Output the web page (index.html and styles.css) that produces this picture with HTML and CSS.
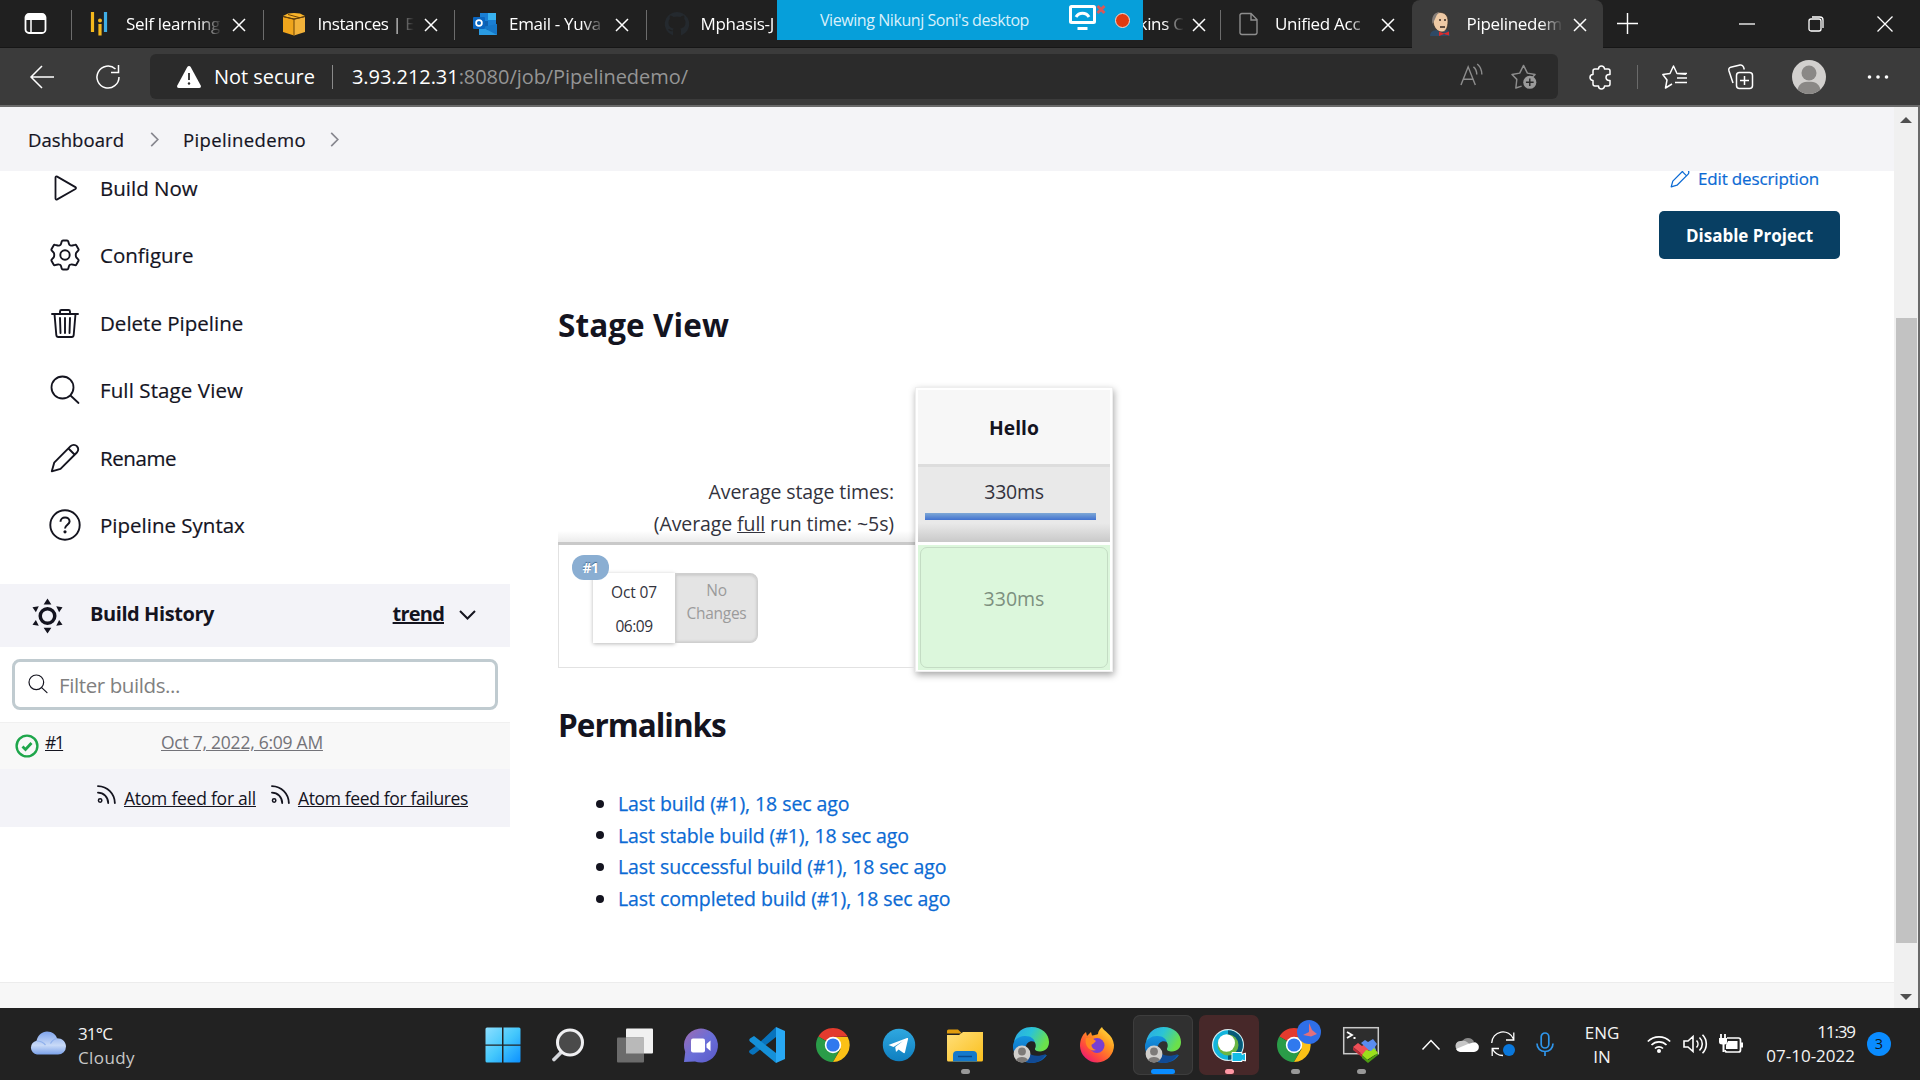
FILE: index.html
```html
<!DOCTYPE html>
<html lang="en">
<head>
<meta charset="utf-8">
<title>Pipelinedemo [Jenkins]</title>
<link rel="stylesheet" href="styles.css">
</head>
<body>
<svg class="defs" aria-hidden="true">
  <defs>
    <linearGradient id="g-edge1" x1="0" y1="0" x2="1" y2="0.4"><stop offset="0" stop-color="#2aa6e8"/><stop offset="0.5" stop-color="#2bc4d6"/><stop offset="1" stop-color="#6be04a"/></linearGradient>
    <linearGradient id="g-edge2" x1="0" y1="0" x2="0" y2="1"><stop offset="0" stop-color="#1595e0"/><stop offset="1" stop-color="#0b5cb4"/></linearGradient>
    <linearGradient id="g-win" gradientUnits="userSpaceOnUse" x1="0" y1="0" x2="36" y2="36"><stop offset="0" stop-color="#8fe0ff"/><stop offset="0.5" stop-color="#45c8fc"/><stop offset="1" stop-color="#0a8fff"/></linearGradient>
    <linearGradient id="g-cloud" x1="0" y1="0" x2="0" y2="1"><stop offset="0" stop-color="#7fa4ec"/><stop offset="0.6" stop-color="#c9daf7"/><stop offset="1" stop-color="#7ba2ea"/></linearGradient>
    <linearGradient id="g-chat" x1="0" y1="0" x2="1" y2="1"><stop offset="0" stop-color="#a06bb0"/><stop offset="0.5" stop-color="#6a6fd8"/><stop offset="1" stop-color="#5a58c8"/></linearGradient>
    <linearGradient id="g-folder" x1="0" y1="0" x2="1" y2="1"><stop offset="0" stop-color="#ffdf7a"/><stop offset="1" stop-color="#fbbf1c"/></linearGradient>
    <linearGradient id="g-fox" x1="1" y1="0" x2="0.2" y2="1"><stop offset="0" stop-color="#fff04a"/><stop offset="0.4" stop-color="#ff9a1f"/><stop offset="0.75" stop-color="#ff4a3c"/><stop offset="1" stop-color="#e8147c"/></linearGradient>
    <linearGradient id="g-tg" x1="0" y1="0" x2="0" y2="1"><stop offset="0" stop-color="#2fa8e0"/><stop offset="1" stop-color="#0f7fc0"/></linearGradient>
    <symbol id="i-x" viewBox="0 0 14 14"><path d="M1 1l12 12M13 1L1 13" fill="none" stroke="currentColor" stroke-width="1.5"/></symbol>
    <symbol id="i-chev" viewBox="0 0 9 16"><path d="M1 1l7 7-7 7" fill="none" stroke="#87878f" stroke-width="1.8"/></symbol>
    <symbol id="i-search" viewBox="0 0 30 30"><circle cx="12.5" cy="12.5" r="11" fill="none" stroke="currentColor" stroke-width="1.8"/><path d="M20.5 20.5l8 7.5" stroke="currentColor" stroke-width="1.8" stroke-linecap="round"/></symbol>
    <symbol id="i-pencil" viewBox="0 0 30 30"><path d="M1.8 28.3l2.4-8.6L20.6 3.2a4.4 4.4 0 0 1 6.3 0 4.4 4.4 0 0 1 0 6.3L10.5 25.8zM18.5 5.5l6 6" fill="none" stroke="currentColor" stroke-width="1.9" stroke-linejoin="round"/></symbol>
    <symbol id="i-rss" viewBox="0 0 20 20"><circle cx="3.3" cy="16.3" r="1.8" fill="none" stroke="currentColor" stroke-width="1.6"/><path d="M1 8c6 0 10.8 4.6 10.8 11M1 1.2C11 1.4 18.6 9 18.8 19" fill="none" stroke="currentColor" stroke-width="1.9" stroke-linecap="round"/></symbol>
    <symbol id="i-chrome" viewBox="0 0 34 34"><path d="M17 17L2.3 8.5A17 17 0 0 1 31.7 8.5L17 9z" fill="#e33b2e"/><path d="M17 17L2.3 8.5A17 17 0 0 0 17 34l7-13z" fill="#2a9c48"/><path d="M17 9h14.7A17 17 0 0 1 17 34l7.5-13z" fill="#fbc116"/><circle cx="17" cy="17" r="8.2" fill="#fff"/><circle cx="17" cy="17" r="6.6" fill="#3079ee"/></symbol>
    <symbol id="i-edge" viewBox="0 0 36 36"><path d="M1 15C3 5 10 0 18.500 0 29 0 36 7 36 15c0 6-4 9.500-9 9.500-3.500 0-5.500-1.300-5-3 1.500-2 1-7-3-8.500-5-2-13-1.500-18 2z" fill="url(#g-edge1)"/><path d="M0 18c1-6 7-9.500 12.500-9C18 9 21 12 22 15c-5-2-9 1-9 5 0 7 7 11 14 10 3-.5 5-2 7-2-4 6-10 8-16 8C7 36-1 27 0 18z" fill="url(#g-edge2)"/><path d="M13 18c-1.500 9 8 13.500 20 9-3 6-9 9-15 9-8-2-11-12-5-18z" fill="#114a94"/><circle cx="9" cy="27" r="8.400" fill="#d0cecb"/><circle cx="9" cy="24.500" r="3.900" fill="#7d7a78"/><path d="M3 33a6.500 5 0 0 1 12 0 8.400 8.400 0 0 1-12 0z" fill="#7d7a78"/></symbol>
  </defs>
</svg>

<header class="browser">
  <div class="tabstrip">
    <div class="workspace"><svg width="24" height="24" viewBox="0 0 24 24"><rect x="1.500" y="2" width="20" height="19" rx="3.500" fill="none" stroke="#fff" stroke-width="1.800"/><path d="M1.500 8V5a3.500 3.500 0 0 1 3.500-3h13a3.500 3.500 0 0 1 3.500 3v3z" fill="#fff"/><path d="M7 8v13" stroke="#fff" stroke-width="1.500"/></svg></div>
    <div class="tab"><svg class="fav" viewBox="0 0 24 24"><path d="M2.500 0v20M10 18v5.500M10 12v8" stroke="#f5b81c" stroke-width="3.200"/><circle cx="10" cy="8.500" r="2" fill="#f5b81c"/><path d="M15.500 0v20" stroke="#3faee6" stroke-width="3.200"/></svg><span class="title">Self learning</span><svg class="close"><use href="#i-x"/></svg></div>
    <div class="tab"><svg class="fav" viewBox="0 0 24 24"><path d="M1 5l11 2.500v16L1 20z" fill="#f0a51c"/><path d="M12 7.500L23 5v15l-11 3.500z" fill="#f2b23a"/><path d="M1 4l5-2.500L12 1l6 .5L23 4l-11 2.500z" fill="#f9b42a"/><path d="M1 4.500l11 2.800 11-2.800M12 7v16M6 2.500l11 3" stroke="#6b4206" fill="none"/></svg><span class="title tight">Instances | E</span><svg class="close"><use href="#i-x"/></svg></div>
    <div class="tab"><svg class="fav" viewBox="0 0 24 24"><path d="M7 1h16v15H7z" fill="#1a7fd4"/><path d="M15 1h8v7h-8z" fill="#38b2f0"/><path d="M7 9h8v8H7z" fill="#0f5fae"/><path d="M6 12l9 6 9-6v11H6z" fill="#2a9be2"/><path d="M24 12v11L9 15z" fill="#1677c8"/><rect x="0" y="5" width="12" height="12" rx="1" fill="#0b66c0"/><circle cx="6" cy="11" r="2.900" fill="none" stroke="#fff" stroke-width="1.700"/></svg><span class="title">Email - Yuva</span><svg class="close"><use href="#i-x"/></svg></div>
    <div class="tab"><svg class="fav" viewBox="0 0 24 24"><path d="M12 0a12 12 0 0 0-4 23.400V19c-3 1-4-1-5-2 3 0 3 2 5 1.500 0-1 .3-1.500.8-2C5 16 3.500 13.500 3.500 10.500c0-1.500.5-2.700 1.300-3.500-.3-1.200-.2-2.500.2-3.500 1.500 0 2.800.9 3.500 1.500a12 12 0 0 1 7 0C16.200 4.400 17.500 3.500 19 3.500c.4 1 .5 2.300.2 3.500.8.800 1.300 2 1.300 3.500 0 3-1.500 5.500-5.300 6 .5.500.8 1.200.8 2.200v4.700A12 12 0 0 0 12 0z" fill="#24292e"/></svg><span class="title wide">Mphasis-J</span></div>
    <div class="tab"></div>
    <div class="tab jenkins"><span class="title">kins C</span><svg class="close"><use href="#i-x"/></svg></div>
    <div class="tab"><svg class="fav" viewBox="0 0 24 24"><path d="M5 1.500h9l6 6V20a2 2 0 0 1-2 2.500H5A2 2 0 0 1 3 20V4a2 2 0 0 1 2-2.500zM14 1.500V8h6" fill="none" stroke="#8d8d8d" stroke-width="1.400" transform="translate(-2)"/></svg><span class="title">Unified Acc</span><svg class="close"><use href="#i-x"/></svg></div>
    <div class="tab active"><svg class="fav" viewBox="0 0 24 24"><g transform="translate(-3)"><path d="M2 24c0-4 3-6 8-6l6-1c4 0 6 3 6 7z" fill="#2f4a66"/><path d="M5 8C5 3 8 .5 12.500.5S20 4 20 9c0 6-2 11-6 11S5 16 5 8z" fill="#edc9a4" stroke="#3b3027" stroke-width=".7"/><path d="M4.500 12C3 5 6 0 12 0 7.500 3 8 6 6.500 8z" fill="#857d78"/><path d="M11 8h2M16 8h2M12 15h5" stroke="#35271f" stroke-width="1.300"/><path d="M11 19.500l5 2 5-2v4l-5-1.500-5 2z" fill="#dc2b2b"/></g></svg><span class="title">Pipelinedem</span><svg class="close"><use href="#i-x"/></svg></div>
    <svg class="newtab" viewBox="0 0 22 22"><path d="M11 0v22M0 11h22" stroke="#fff" stroke-width="1.500"/></svg>
    <div class="window-controls">
      <svg viewBox="0 0 16 16"><path d="M0 8h16" stroke="#fff" stroke-width="1.300"/></svg>
      <svg viewBox="0 0 16 16"><rect x="1" y="3" width="12" height="12" rx="2" fill="none" stroke="#fff" stroke-width="1.300"/><path d="M4 1h8a3 3 0 0 1 3 3v8" fill="none" stroke="#fff" stroke-width="1.300"/></svg>
      <svg viewBox="0 0 16 16"><path d="M.5.5l15 15m0-15l-15 15" stroke="#fff" stroke-width="1.300"/></svg>
    </div>
  </div>
  <div class="toolbar">
    <svg class="back" viewBox="0 0 24 24"><path d="M24 12H1M12 1L1 12l11 11" fill="none" stroke="#fff" stroke-width="1.500"/></svg>
    <svg class="reload" viewBox="0 0 24 24"><path d="M23 12a11 11 0 1 1-3.500-8M22.500 0v7.500H15" fill="none" stroke="#fff" stroke-width="1.500"/></svg>
    <div class="address">
      <svg class="warn" viewBox="0 0 24 22"><path d="M12 0c.8 0 1.300.4 1.700 1l10 18.500c.6 1.300 0 2.500-1.500 2.500H1.800C.3 22-.3 20.800.3 19.500L10.300 1c.4-.6.9-1 1.700-1z" fill="#fff"/><path d="M12 7v7" stroke="#2b2b2b" stroke-width="1.800"/><circle cx="12" cy="17.500" r="1.200" fill="#2b2b2b"/></svg>
      <span class="insecure">Not secure</span>
      <span class="bar"></span>
      <span class="url">3.93.212.31<span class="path">:8080/job/Pipelinedemo/</span></span>
      <svg class="read" viewBox="0 0 24 24"><path d="M1 23L8.500 4 16 23M3.500 17h10M14 4c2.500 2 3.500 5 3.500 8M18 1c3.500 3 4.800 6.500 4.800 11" fill="none" stroke="#8d8d8d" stroke-width="1.500"/></svg>
      <svg class="star" viewBox="0 0 26 26"><path d="M10 23l-6 2 1-9-5-5 8-1.500L12 1.500l4 8 8 1.500-3 3" fill="none" stroke="#8d8d8d" stroke-width="1.500" stroke-linejoin="round"/><circle cx="18.500" cy="19" r="6.800" fill="#9a9a9a"/><path d="M18.500 15v8M14.500 19h8" stroke="#2b2b2b" stroke-width="1.500"/></svg>
    </div>
    <svg class="puzzle" viewBox="0 0 24 24"><path d="M6 4h3.500a3 3 0 0 1 6 0H19q2 0 2 2v3.500h-1a3 3 0 0 0 0 6h1V19q0 2-2 2h-3.500a3 3 0 0 1-6 0H6q-2 0-2-2v-3.500a3 3 0 0 1 0-6V6q0-2 2-2z" fill="none" stroke="#fff" stroke-width="1.500" stroke-linejoin="round"/></svg>
    <span class="bar dim"></span>
    <svg class="favs" viewBox="0 0 26 24"><path d="M10 19l-6.500 4L5 15 .8 9.500 8 8.500 11.500 1 15 8.500l9 .8M15 13h10M13 17.500h12M16 8.500h9" fill="none" stroke="#fff" stroke-width="1.500" stroke-linejoin="round"/></svg>
    <svg class="coll" viewBox="0 0 26 26"><rect x="8.500" y="8.500" width="16" height="16" rx="3" fill="none" stroke="#fff" stroke-width="1.500"/><path d="M16.500 12v9M12 16.500h9M5 19l-4-12c-.6-2 0-3.300 1.700-3.800L12 1c2-.4 3 .5 3.500 2l.8 2.500" fill="none" stroke="#fff" stroke-width="1.500"/></svg>
    <svg class="avatar" viewBox="0 0 34 34"><circle cx="17" cy="17" r="17" fill="#d2d0ce"/><circle cx="17" cy="13" r="7.500" fill="#8a8886"/><path d="M5.500 29.500C7 23.500 11 21.800 17 21.800s10 1.700 11.500 7.700A17 17 0 0 1 5.500 29.500z" fill="#8a8886"/></svg>
    <svg class="dots" viewBox="0 0 22 4"><circle cx="2.500" cy="2" r="1.800" fill="#fff"/><circle cx="11" cy="2" r="1.800" fill="#fff"/><circle cx="19.500" cy="2" r="1.800" fill="#fff"/></svg>
  </div>
  <div class="share-banner">
    <span class="share-text">Viewing Nikunj Soni's desktop</span>
    <svg class="screen" viewBox="0 0 38 26"><rect x="1.500" y="1.500" width="24" height="16" rx="1" fill="none" stroke="#fff" stroke-width="3"/><path d="M7 12c3-5 10-5 13 0" fill="none" stroke="#fff" stroke-width="3"/><path d="M8.500 23.500h10" stroke="#fff" stroke-width="3"/><path d="M28.500 1l7 7m0-7l-7 7" stroke="#d75a5a" stroke-width="3"/></svg>
    <span class="rec"></span>
  </div>
</header>

<div class="viewport">
  <div class="page">
    <nav class="crumbs">
      <span>Dashboard</span><svg class="chev"><use href="#i-chev"/></svg>
      <span class="crumb-job">Pipelinedemo</span><svg class="chev"><use href="#i-chev"/></svg>
    </nav>
    <div class="body">
      <aside class="side">
        <ul class="tasks">
          <li><svg viewBox="0 0 32 32"><path d="M6.500 5.500v21c0 1 .8 1.300 1.700.9l18.200-10.400c.8-.5.8-1.400 0-1.900L8.200 4.600c-.9-.4-1.700-.1-1.700.9z" fill="none" stroke="currentColor" stroke-width="1.800"/></svg><span>Build Now</span></li>
          <li><svg viewBox="0 0 32 32"><path d="M12.700 2.500Q13 1.500 14 1.500h4q1 0 1.300 1l.7 2.500q.3 1 1.300 1.300 1 .6 2 .2l2.600-.6q1-.3 1.500.6l2 3.500q.5.900-.2 1.600l-1.800 1.900q-.7.700-.6 2.500-.1 1.800.6 2.500l1.800 1.900q.7.700.2 1.600l-2 3.500q-.5.900-1.500.6l-2.600-.6q-1-.4-2 .2-1 .3-1.300 1.300l-.7 2.500q-.3 1-1.300 1h-4q-1 0-1.300-1l-.7-2.500q-.3-1-1.300-1.300-1-.6-2-.2l-2.600.6q-1 .3-1.500-.6l-2-3.500q-.5-.9.200-1.600l1.800-1.900q.7-.7.600-2.500.1-1.800-.6-2.500l-1.800-1.900q-.7-.7-.2-1.600l2-3.500q.5-.9 1.500-.6l2.600.6q1 .4 2-.2 1-.3 1.300-1.300z" fill="none" stroke="currentColor" stroke-width="1.900"/><circle cx="16" cy="16" r="4.700" fill="none" stroke="currentColor" stroke-width="1.900"/></svg><span>Configure</span></li>
          <li><svg viewBox="0 0 32 32"><path d="M3 7h26M5.500 7l1.800 21q.2 2 2 2h13.400q1.800 0 2-2l1.800-21M11 7V4.500Q11 3 12.500 3h7Q21 3 21 4.500V7M16 11v15M11 11l.5 15M21 11l-.5 15" fill="none" stroke="currentColor" stroke-width="1.900" stroke-linecap="round"/></svg><span>Delete Pipeline</span></li>
          <li><svg viewBox="-1 -1 32 32"><use href="#i-search" width="30" height="30"/></svg><span class="roomy">Full Stage View</span></li>
          <li><svg viewBox="-1 -1 32 32"><use href="#i-pencil" width="30" height="30"/></svg><span class="snug">Rename</span></li>
          <li><svg viewBox="0 0 32 32"><circle cx="16" cy="16" r="14.700" fill="none" stroke="currentColor" stroke-width="1.900"/><path d="M11.500 12.700c0-2.500 2-4.200 4.600-4.200 2.500 0 4.500 1.600 4.500 4 0 3-4.600 3.500-4.600 7" fill="none" stroke="currentColor" stroke-width="2"/><circle cx="16" cy="22.800" r="1.600" fill="currentColor"/></svg><span>Pipeline Syntax</span></li>
        </ul>
        <section class="history">
          <header class="history-head">
            <svg class="sun" viewBox="0 0 32 36"><circle cx="16" cy="18" r="7.500" fill="none" stroke="currentColor" stroke-width="3.600"/><g fill="currentColor"><path d="M16 0l4 6h-8zM16 36l4-6h-8zM.500 9l6.500-1-3 6zM31.500 9L25 8l3 6zM.500 27l6.500 1-3-6zM31.500 27l-6.500 1 3-6z"/></g></svg>
            <span>Build History</span>
            <a>trend</a>
            <svg class="down" viewBox="0 0 17 10"><path d="M1 1l7.500 7.500L16 1" fill="none" stroke="currentColor" stroke-width="2"/></svg>
          </header>
          <div class="filter"><svg><use href="#i-search"/></svg><span>Filter builds...</span></div>
          <div class="build"><svg class="ok" viewBox="0 0 24 24"><circle cx="12" cy="12" r="10.400" fill="none" stroke="#1ea64b" stroke-width="2.400"/><path d="M7.500 12.500l3 3 6-6.500" fill="none" stroke="#1ea64b" stroke-width="2.800"/></svg><a class="num">#1</a><a class="date">Oct 7, 2022, 6:09 AM</a></div>
          <footer class="feeds">
            <svg><use href="#i-rss"/></svg><a>Atom feed for all</a>
            <svg><use href="#i-rss"/></svg><a>Atom feed for failures</a>
          </footer>
        </section>
      </aside>
      <main class="content">
        <div class="actions">
          <a class="edit"><svg><use href="#i-pencil"/></svg><span>Edit description</span></a>
          <button class="disable">Disable Project</button>
        </div>
        <h2>Stage View</h2>
        <div class="stages">
          <div class="runs">
            <div class="averages">
              <div>Average stage times:</div>
              <div>(Average <u>full</u> run time: ~5s)</div>
            </div>
            <div class="run">
              <span class="badge">#1</span>
              <div class="when"><span>Oct 07</span><span class="hour">06:09</span></div>
              <div class="changes"><span>No</span><span>Changes</span></div>
            </div>
          </div>
          <div class="stage">
            <div class="stage-name">Hello</div>
            <div class="stage-avg">330ms<span class="meter"></span></div>
            <div class="stage-run"><div class="cell">330ms</div></div>
          </div>
        </div>
        <h2 class="perma">Permalinks</h2>
        <ul class="links">
          <li><a>Last build (#1), 18 sec ago</a></li>
          <li><a>Last stable build (#1), 18 sec ago</a></li>
          <li><a>Last successful build (#1), 18 sec ago</a></li>
          <li><a>Last completed build (#1), 18 sec ago</a></li>
        </ul>
      </main>
    </div>
    <div class="page-footer"></div>
  </div>
  <div class="scrollbar">
    <svg class="arrow" viewBox="0 0 12 6"><path d="M0 6h12L6 0z" fill="#505050"/></svg>
    <div class="thumb"></div>
    <svg class="arrow" viewBox="0 0 12 6"><path d="M0 0h12L6 6z" fill="#505050"/></svg>
  </div>
</div>

<footer class="taskbar">
  <div class="weather">
    <svg viewBox="0 0 36 24"><path d="M7 23.500a7 7 0 0 1-.5-13.800C8 4 12 .5 17 .5c5.500 0 8.700 3 10 6.700 5 0 9 3.500 9 8.300a8 8 0 0 1-8 8z" fill="url(#g-cloud)"/><path d="M7 10c4 0 6 1 8.500 4M27 7.500c-3 .5-5 2-6.500 5" fill="none" stroke="#8fb0ec" stroke-width="1.200"/></svg>
    <div><div class="temp">31°C</div><div class="sky">Cloudy</div></div>
  </div>
  <div class="apps">
    <div class="app"><svg viewBox="0 0 36 36"><g fill="url(#g-win)"><path d="M.5 2q0-1.500 1.500-1.500h15v17H.5z"/><path d="M18.500.5H34q1.500 0 1.500 1.500v15.500h-17z"/><path d="M.5 18.800H17v16.700H2Q.5 35.500.5 34z"/><path d="M18.500 18.800h17V34q0 1.500-1.500 1.500H18.500z"/></g></svg></div>
    <div class="app"><svg viewBox="0 0 36 36"><path d="M12 23.500l-9 9" stroke="#d4d6da" stroke-width="3.800" stroke-linecap="round"/><circle cx="19" cy="15.500" r="12.500" fill="#4a4a4a" stroke="#f0f0f2" stroke-width="3"/></svg></div>
    <div class="app"><svg viewBox="0 0 36 36"><rect x="9" y="1.500" width="27" height="25" rx="1" fill="#f1f1f1"/><rect x="0" y="10.500" width="27" height="25" rx="1" fill="#6b6b6b"/><rect x="9" y="10.500" width="18" height="16" fill="#b9b9b9"/></svg></div>
    <div class="app"><svg viewBox="0 0 36 36"><path d="M1 35l1.200-10A17 17 0 1 1 12 34.500z" fill="url(#g-chat)"/><rect x="8" y="11.500" width="14" height="14" rx="2" fill="#fff"/><path d="M23.500 17l4-3.500v10.500l-4-3.500z" fill="#fff"/></svg></div>
    <div class="app"><svg viewBox="0 0 36 36"><path d="M27 0L8 18 .5 23.500Q-.5 25 1 26.300l2 1.300q1 .5 2.500-.6L27 10z" fill="#0873bd"/><path d="M5 9L1 11.500q-1.500 1.500 0 3L27 36V26z" fill="#1590d8"/><path d="M27 0l9 4v28l-9 4z" fill="#28a8f4"/></svg></div>
    <div class="app"><svg viewBox="-1 -1 36 36"><use href="#i-chrome" width="34" height="34"/></svg></div>
    <div class="app"><svg viewBox="0 0 36 36"><circle cx="18" cy="18" r="16.200" fill="url(#g-tg)"/><path d="M7.500 18L26 11c.8-.3 1.300 0 1 1.200l-3 13c-.2 1-1 1.200-1.800.6l-4.600-3.300-2.600 2.500-.8-5L22 14l-9.500 6z" fill="#fff"/></svg></div>
    <div class="app open"><svg viewBox="0 0 36 36"><path d="M0 4q0-1.500 1.500-1.500H11l4 4H0z" fill="#e09c0c"/><path d="M0 8h12l4-3h20v28q0 1.500-1.500 1.500h-33Q0 34.500 0 33z" fill="url(#g-folder)"/><path d="M6 34.500V28q0-4 4-4h16q4 0 4 4v6.500z" fill="#1479cc"/><path d="M11 29.500h14" stroke="#0a4a8c" stroke-width="1.500"/></svg></div>
    <div class="app"><svg><use href="#i-edge"/></svg></div>
    <div class="app"><svg viewBox="0 0 36 36"><path d="M1 19C1 13 3 8 7 5l1 4 4-4 1 3.500c3-.5 5-1 6-1.500 0-3 2-5 4-7 1 4 11 7 12 18a17 17 0 0 1-34 1z" fill="url(#g-fox)"/><circle cx="18" cy="18.500" r="7.500" fill="#7a3fd0"/><path d="M7 11c4-1 7 0 10 3l-3 3c-3 0-1 5 3 6-5 2-12-3-10-12z" fill="#ff8a20"/></svg></div>
    <div class="app active"><svg><use href="#i-edge"/></svg></div>
    <div class="app alert"><svg viewBox="0 0 36 36"><circle cx="17" cy="18" r="16" fill="#d9eef2"/><circle cx="17" cy="18" r="14.800" fill="#12b4dc"/><path d="M17 3.200A14.800 14.800 0 0 1 17 32.800z" fill="#075a78"/><circle cx="17" cy="18" r="10.500" fill="#6bb544"/><ellipse cx="15.500" cy="16" rx="8.500" ry="8.800" fill="#fff"/><path d="M21 25.500h10v2l3.500-1.500v8L31 33v1.500H21z" fill="#14bbe6" stroke="#fff"/></svg></div>
    <div class="app open"><svg viewBox="0 -1 36 36"><use href="#i-chrome" width="34" height="34"/></svg><svg class="pin" viewBox="0 0 24 24"><circle cx="12" cy="12" r="12" fill="#2f6fe8"/><path d="M12 3l3 7 5 4-6 2.500-8-1.500 6-3z" fill="#e2707c"/></svg></div>
    <div class="app open"><svg viewBox="0 0 36 36"><rect x=".700" y=".700" width="34.600" height="26" fill="#2d2d2d" stroke="#c9c9c9" stroke-width="1.500"/><path d="M4 5l5 3-5 3M10.500 11h2" fill="none" stroke="#fff" stroke-width="1.800"/><path d="M10 20l5-4 4 3 3-2 5 5-7 6z" fill="#ee4f57"/><path d="M10 20v3l10 8v-3z" fill="#b92e38"/><path d="M18 16l4-3 3 2 5-3 4 5-2 3 1 3-5 2z" fill="#5a8cf0"/><path d="M19 28l4-5 5 1 3-3 4 5-11 7z" fill="#9be01c"/><path d="M19 28v3l6 5 10-8v-2l-10 7z" fill="#4d9c12"/></svg></div>
  </div>
  <div class="tray">
    <svg class="up" viewBox="0 0 18 11"><path d="M.5 10.500L9 1.500l8.500 9" fill="none" stroke="#fff" stroke-width="1.500"/></svg>
    <svg class="drive" viewBox="0 0 24 16"><path d="M7 6a6.500 6.500 0 0 1 12 0l-5 4z" fill="#8a8a8a"/><path d="M5 15A5 5 0 0 1 6 5c4-1 7 1 9 4z" fill="#c6c6c6"/><path d="M1 13l12-5 6-1.800a4.800 4.800 0 0 1 0 9.800H5a5 5 0 0 1-4-3z" fill="#fff"/></svg>
    <svg class="sync" viewBox="0 0 24 24"><path d="M.7 11A11.300 11.300 0 0 1 22.500 7M22.800.5V8H15M8 16.500H1.200V24M1.500 17c2 4 6 6.500 10.500 6.500" fill="none" stroke="#fff" stroke-width="1.300"/><circle cx="18" cy="18" r="6" fill="#0a78dc"/></svg>
    <svg class="mic" viewBox="0 0 18 24"><rect x="5.200" y="1" width="7.600" height="15" rx="3.800" fill="none" stroke="#2f95ea" stroke-width="1.700"/><path d="M1 11.500c0 5 3.500 8 8 8s8-3 8-8M9 19.500V24" fill="none" stroke="#2f95ea" stroke-width="1.700"/></svg>
    <div class="lang"><div>ENG</div><div>IN</div></div>
    <svg class="wifi" viewBox="0 0 24 18"><path d="M.8 6.500a16 16 0 0 1 22.400 0M4.500 10a10.600 10.600 0 0 1 15 0M8 13.500a5.700 5.700 0 0 1 8 0" fill="none" stroke="#fff" stroke-width="1.700"/><circle cx="12" cy="16" r="2" fill="#fff"/></svg>
    <svg class="sound" viewBox="0 0 24 20"><path d="M1 7v6h4l5 4.500v-15L5 7zM13.500 6.500a5 5 0 0 1 0 7M16.500 3.500a9 9 0 0 1 0 13M19.500.8a13 13 0 0 1 0 18.400" fill="none" stroke="#fff" stroke-width="1.600"/></svg>
    <svg class="power" viewBox="0 0 24 20"><path d="M8 4h11.500q2 0 2 2v10q0 2-2 2H8q-2 0-2-2" fill="none" stroke="#fff" stroke-width="1.700"/><path d="M9 7h9.500v8H7v-4zM22 8.500h2v5h-2zM0 4h8v4q0 2.500-2.500 2.500V18h-2v-7.500Q0 10.500 0 8z" fill="#fff"/><path d="M2 0v5M6 0v5" stroke="#fff" stroke-width="1.800"/></svg>
    <div class="clock"><div class="time">11:39</div><div>07-10-2022</div></div>
    <span class="count">3</span>
  </div>
</footer>
</body>
</html>
```
FILE: styles.css
```css
* { box-sizing: border-box; }
body { margin: 0; width: 1920px; height: 1080px; overflow: hidden; display: flex; flex-direction: column; font-family: "Open Sans", "Noto Sans", sans-serif; color: #14141f; white-space: nowrap; }
svg { display: block; flex: none; overflow: visible; }
ul { list-style: none; margin: 0; padding: 0; }
.defs { position: absolute; width: 0; height: 0; }

/* Browser chrome */
.browser { position: relative; flex: none; height: 107px; background: #3b3b3b; border-bottom: 2px solid #6a6a6a; color: #fff; }
.tabstrip { display: flex; height: 48px; background: #202020; box-shadow: inset 0 -1px #161616; }
.workspace { width: 71px; padding: 12px 0 0 24px; }
.tab { position: relative; width: 191.5px; height: 48px; display: flex; align-items: center; padding-left: 19px; font-size: 17px; letter-spacing: -.3px; }
.tab::before { content: ""; position: absolute; left: 0; top: 10px; width: 1px; height: 30px; background: #6c6c6c; }
.tab.active { background: #3b3b3b; border-radius: 8px 8px 0 0; }
.tab.active::before, .tab:nth-child(6)::before { display: none; }
.fav { width: 24px; height: 24px; }
.title { width: 100px; margin: 0 5px 2px 12px; -webkit-mask-image: linear-gradient(90deg, #000 74%, transparent 96%); mask-image: linear-gradient(90deg, #000 74%, transparent 96%); }
.title.tight { letter-spacing: -.45px; }
.title.wide { width: 130px; }
.tab.jenkins .title { width: 50px; margin: 0 2px 2px 110px; -webkit-mask-image: linear-gradient(90deg, #000 50%, transparent 90%); mask-image: linear-gradient(90deg, #000 50%, transparent 90%); }
.tab.jenkins { padding-left: 0; }
.close { width: 14px; height: 14px; margin: 2px 0 0 1px; color: #fff; }
.newtab { width: 21px; height: 21px; margin: 13px 0 0 14px; }
.window-controls { display: flex; gap: 53px; margin: 16px 27px 0 auto; }
.window-controls svg { width: 16px; height: 16px; }
.toolbar { height: 57px; display: flex; align-items: center; padding-left: 30px; font-size: 20px; letter-spacing: -.05px; }
.back, .reload { width: 24px; height: 24px; }
.reload { margin: 0 30px 0 42px; }
.address { width: 1408px; height: 45px; display: flex; align-items: center; padding-left: 27px; border-radius: 6px; background: #2b2b2b; }
.warn { width: 24px; height: 22px; margin-right: 13px; }
.bar { width: 1px; height: 24px; margin: 0 19px 0 17px; background: #8a8a8a; }
.bar.dim { margin: 0 24px 0 24px; background: #6a6a6a; }
.path { color: #959595; }
.read { width: 23px; height: 23px; margin-left: auto; margin-right: 29px; margin-bottom: 4px; }
.star { width: 25px; height: 25px; margin-right: 21px; }
.puzzle { width: 24px; height: 24px; margin-left: 31px; }
.favs { width: 26px; height: 24px; }
.coll { width: 26px; height: 26px; margin-left: 40px; }
.avatar { width: 34px; height: 34px; margin-left: 38px; }
.dots { width: 22px; height: 4px; margin-left: 41px; }
.share-banner { position: absolute; left: 777px; top: 0; width: 366px; height: 40px; display: flex; align-items: center; padding-left: 43px; background: #069fda; font-size: 16px; letter-spacing: -.43px; color: #d8f0fa; }
.share-text { width: 209px; }
.screen { width: 38px; height: 26px; margin: 0 8px 4px 40px; }
.rec { width: 15px; height: 15px; border-radius: 50%; background: #e03a10; border: 1px solid #f4d8d0; }

/* Page */
.viewport { flex: none; height: 901px; display: flex; }
.page { width: 1894px; display: flex; flex-direction: column; background: #fff; }
.crumbs { flex: none; height: 64px; display: flex; align-items: center; padding: 1px 0 0 28px; background: #f4f4f7; font-size: 18.500px; letter-spacing: .06px; -webkit-text-stroke: .2px; }
.crumb-job { letter-spacing: .37px; }
.chev { width: 9px; height: 15px; margin: 0 24px 0 26px; }
.crumb-job + .chev { margin-left: 24px; }
.body { flex: none; height: 811px; display: flex; overflow: hidden; }
.page-footer { flex: 1; border-top: 1px solid #ececec; background: #f7f7f7; }
.side { width: 510px; }
.tasks { margin-top: -17px; font-size: 20.500px; -webkit-text-stroke: .2px; }
.tasks li { height: 67.500px; display: flex; align-items: center; padding-left: 49px; gap: 19px; }
.tasks svg { width: 32px; height: 32px; }
.tasks .roomy { letter-spacing: .1px; }
.tasks .snug { letter-spacing: -.4px; }
.history { margin-top: 25px; }
.history-head { height: 63px; display: flex; align-items: center; padding: 0 34px 4px 32px; background: #f3f3f8; font-size: 20px; font-weight: 700; letter-spacing: -.42px; }
.history-head a { margin-left: auto; text-decoration: underline; letter-spacing: -.8px; }
.sun { width: 31px; height: 36px; margin: 4px 27px 0 0; }
.down { width: 17px; height: 10px; margin: 3px 0 0 15px; }
.filter { height: 51px; display: flex; align-items: center; gap: 11px; margin: 12px; padding-left: 13px; border: 3px solid #c0cbd0; border-radius: 8px; font-size: 20.500px; letter-spacing: -.4px; color: #808080; }
.filter svg { width: 20px; height: 20px; color: #14141f; margin-bottom: 2px; }
.build { height: 47px; display: flex; padding: 7px 0 0 15px; background: #f8f8f8; border-top: 1px solid #f0f0f0; font-size: 17.500px; }
.build a, .feeds a { text-decoration: underline; }
.ok { width: 24px; height: 24px; margin: 4px 6px 0 0; }
.num { width: 18px; letter-spacing: -1.600px; }
.date { margin-left: 98px; color: #737379; letter-spacing: -.25px; }
.feeds { height: 58px; display: flex; align-items: center; padding-left: 97px; background: #f3f3f8; font-size: 17.500px; letter-spacing: -.24px; }
.feeds svg { width: 19px; height: 19px; margin: 0 8px 7px 0; }
.feeds a + svg { margin-left: 15px; }
.feeds svg + a:last-child { letter-spacing: -.36px; }
.content { position: relative; flex: 1; padding-left: 48px; }
.actions { position: absolute; right: 54px; top: -7px; display: flex; flex-direction: column; }
.edit { display: flex; align-items: center; height: 28px; padding-left: 11px; gap: 8px; color: #0b6ad4; font-size: 17px; letter-spacing: -.15px; -webkit-text-stroke: .2px; }
.edit svg { width: 20px; height: 20px; }
.disable { width: 181px; height: 48px; margin: 19px 0 0; padding: 0; border: 0; border-radius: 5px; background: #083f63; color: #fff; font: 700 17px "Open Sans", sans-serif; }
h2 { margin: 132px 0 0; height: 44px; line-height: 44px; font-size: 31.500px; font-weight: 700; letter-spacing: .07px; }
.stages { display: flex; margin-top: 40px; }
.runs { width: 357px; padding-top: 80px; }
.averages { height: 78px; padding: 9px 21px 0 0; border-bottom: 3px solid #c9c9c9; background: linear-gradient(#fff 85%, #ececec); text-align: right; font-size: 19.500px; line-height: 32px; letter-spacing: -.1px; color: #33333d; }
.run { position: relative; height: 123px; border: 1px solid #e2e2e2; border-width: 0 0 1px 1px; padding: 28px 0 0 34px; display: flex; }
.badge { position: absolute; left: 13px; top: 10px; width: 37px; height: 25px; border-radius: 12px; background: #8aaed2; color: #fff; font-size: 14px; font-weight: 700; line-height: 25px; letter-spacing: -.5px; text-align: center; z-index: 1; text-shadow: 0 -1px 1px #44678a; }
.when, .changes { width: 82px; height: 70px; display: flex; flex-direction: column; align-items: center; font-size: 15.500px; letter-spacing: -.13px; }
.when { line-height: 34px; padding-top: 2px; box-shadow: 0 1px 4px rgba(0,0,0,.28); background: #fff; color: #33333d; }
.hour { letter-spacing: -.5px; }
.changes { width: 83px; padding-top: 4px; line-height: 23px; border: 1px solid #cfcfcf; border-width: 2px 1px 1px; border-radius: 0 8px 8px 0; background: #e4e4e4; color: #9b9b9b; box-shadow: inset 0 0 3px #bbb; letter-spacing: -.27px; }
.stage { width: 198px; height: 285px; padding: 2px; border: 1px solid #eee; background: #fff; box-shadow: 1px 3px 7px rgba(0,0,0,.35); text-align: center; font-size: 19.500px; }
.stage-name { height: 77px; border-bottom: 3px solid #ddd; background: #f7f7f7; line-height: 75px; font-weight: 700; font-size: 19.300px; }
.stage-avg { height: 75px; padding-top: 9px; line-height: 32px; letter-spacing: -.3px; background: linear-gradient(#e9e9e9 75%, #c9c9c9); color: #33333d; }
.meter { display: block; width: 171px; height: 7px; margin: 5px 0 0 7px; background: linear-gradient(#7ea8d6, #4272d0); }
.stage-run { height: 125px; margin-top: 3px; padding: 2px; background: #dcf7dc; }
.cell { height: 121px; border: 1px solid #c4dcc4; border-radius: 7px; line-height: 101px; color: #7d907f; }
.perma { margin-top: 31px; letter-spacing: -1px; }
.links { margin-top: 41px; font-size: 19.500px; line-height: 31.600px; letter-spacing: -.08px; -webkit-text-stroke: .25px; }
.links li { display: flex; align-items: center; gap: 14px; padding-left: 38px; color: #0b6ad4; }
.links li::before { content: ""; width: 8px; height: 8px; border-radius: 50%; background: #14141f; }
.scrollbar { width: 26px; display: flex; flex-direction: column; align-items: center; padding: 10px 0 8px; background: #f0f0f0; border-right: 2px solid #6a6a6a; }
.arrow { width: 12px; height: 6px; }
.thumb { width: 21px; height: 625px; margin: 195px 0 auto; background: #c2c2c2; }

/* Taskbar */
.taskbar { flex: none; height: 72px; display: flex; background: #222; color: #f4f4f4; font-size: 17px; line-height: 24px; }
.weather { width: 473px; display: flex; gap: 12px; padding: 14px 0 0 30px; }
.weather svg { width: 36px; height: 24px; margin-top: 9px; }
.temp { letter-spacing: -.86px; }
.sky { color: #c8c8c8; letter-spacing: .4px; }
.apps { display: flex; gap: 6px; padding-top: 7px; }
.app { position: relative; width: 60px; height: 60px; padding: 12px; border-radius: 7px; }
.app svg { width: 36px; height: 36px; }
.app .pin { position: absolute; left: 32px; top: 5px; width: 24px; height: 24px; }
.app.active { background: #303030; box-shadow: inset 0 0 0 1px #3d3d3d; }
.app.alert { background: #472829; }
.app.open::after, .app.active::after, .app.alert::after { content: ""; position: absolute; left: 26px; top: 54px; width: 9px; height: 5px; border-radius: 3px; background: #989898; }
.app.active::after { left: 18px; width: 24px; background: #0a8cff; }
.app.alert::after { background: #ff98a4; }
.tray { flex: 1; display: flex; align-items: center; padding-left: 31px; }
.up { width: 18px; height: 11px; }
.drive { width: 24px; height: 16px; margin-left: 15px; }
.sync { width: 24px; height: 24px; margin-left: 12px; }
.mic { width: 18px; height: 24px; margin-left: 21px; }
.lang { width: 60px; margin: 2px 0 0 18px; text-align: center; }
.wifi { width: 24px; height: 18px; margin-left: 15px; }
.sound { width: 24px; height: 20px; margin-left: 12px; }
.power { width: 24px; height: 20px; margin-left: 12px; }
.clock { width: 100px; margin-left: 12px; text-align: right; }
.time { letter-spacing: -1.100px; }
.count { width: 24px; height: 24px; margin-left: 12px; border-radius: 50%; background: #0a8cff; color: #101820; font-size: 14.500px; text-align: center; }
```
